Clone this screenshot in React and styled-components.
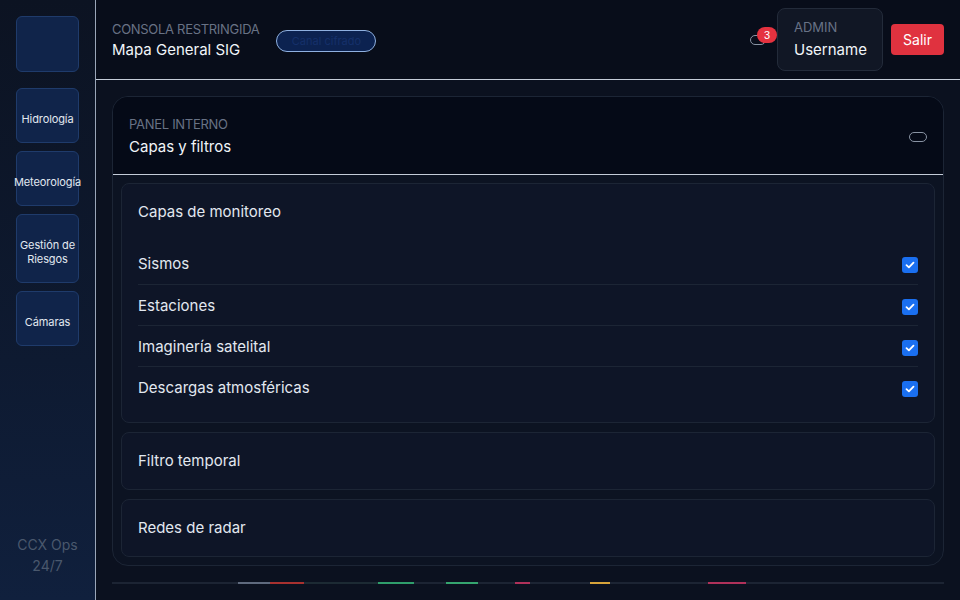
import React from "react";
import styled, { createGlobalStyle } from "styled-components";

const Global = createGlobalStyle`
  * { box-sizing: border-box; }
  html, body { margin: 0; padding: 0; background: #0b111f; }
  body { font-family: Inter, "Noto Sans", sans-serif; color: #e2e8f0; }
`;

const Shell = styled.div`
  display: flex;
  width: 960px;
  height: 600px;
  overflow: hidden;
  background: #0b111f;
`;

const Sidebar = styled.aside`
  width: 96px;
  flex: none;
  display: flex;
  flex-direction: column;
  padding: 16px 16px 24px;
  border-right: 1px solid #9aa6b8;
  background: linear-gradient(180deg, #0c1322 0%, #0e1a31 60%, #10203d 100%);
`;

const NavList = styled.nav`
  display: flex;
  flex-direction: column;
  gap: 8px;
`;

const NavButton = styled.button`
  width: 63px;
  height: ${(p) => (p.$logo ? "56px" : "auto")};
  margin-bottom: ${(p) => (p.$logo ? "8px" : "0")};
  padding: 23px 0 16px;
  display: flex;
  align-items: center;
  justify-content: center;
  text-align: center;
  background: #10244a;
  border: 1px solid #1f3b6b;
  border-radius: 6px;
  color: #e2e8f0;
  font-family: Inter, "Noto Sans", sans-serif;
  font-size: 11px;
  line-height: 14px;
  white-space: pre-line;
  letter-spacing: -0.1px;
`;

const SideFooter = styled.div`
  margin-top: auto;
  text-align: center;
  color: #4a586d;
  font-size: 14px;
  line-height: 21px;
`;

const Main = styled.div`
  flex: 1;
  display: flex;
  flex-direction: column;
  min-width: 0;
`;

const Header = styled.header`
  height: 80px;
  flex: none;
  display: flex;
  align-items: center;
  padding: 0 16px;
  gap: 16px;
  background: #080d1a;
  border-bottom: 1px solid #c4ccd8;
`;

const TitleBlock = styled.div`
  display: flex;
  flex-direction: column;
  gap: 2px;
  padding-top: 1px;
`;

const Eyebrow = styled.div`
  font-size: 13px;
  line-height: 18px;
  color: #687285;
  text-transform: uppercase;
  letter-spacing: -0.3px;
`;

const Title = styled.div`
  font-size: 15px;
  line-height: 20px;
  color: #f1f5f9;
`;

const StatusPill = styled.span`
  width: 100px;
  height: 22px;
  display: inline-flex;
  align-items: center;
  justify-content: center;
  border: 1px solid #8fb0e0;
  border-radius: 11px;
  background: #0c2250;
  color: #15306a;
  font-size: 11px;
  margin-top: 2px;
  margin-left: 1px;
`;

const Actions = styled.div`
  margin-left: auto;
  display: flex;
  align-items: center;
  gap: 8px;
`;

const BellToggle = styled.button`
  position: relative;
  width: 16px;
  height: 10px;
  padding: 0;
  margin-right: 3px;
  border: 1px solid #8993a3;
  border-radius: 5px;
  background: transparent;
`;

const Badge = styled.span`
  position: absolute;
  left: 6px;
  top: -9px;
  min-width: 20px;
  height: 16px;
  border-radius: 8px;
  background: #e5323f;
  color: #fff;
  font-size: 11px;
  line-height: 16px;
  text-align: center;
`;

const UserCard = styled.div`
  width: 106px;
  height: 63px;
  padding: 9px 16px;
  display: flex;
  flex-direction: column;
  gap: 3px;
  background: #111725;
  border: 1px solid #232b3a;
  border-radius: 8px;
`;

const UserRole = styled.div`
  font-size: 13px;
  line-height: 18px;
  color: #687285;
`;

const UserName = styled.div`
  font-size: 15px;
  line-height: 22px;
  color: #f1f5f9;
`;

const LogoutButton = styled.button`
  width: 53px;
  height: 31px;
  border: none;
  border-radius: 4px;
  background: #e0323f;
  color: #fff;
  font-family: Inter, "Noto Sans", sans-serif;
  font-size: 14px;
`;

const Content = styled.main`
  flex: 1;
  padding: 16px 16px 0;
  display: flex;
  flex-direction: column;
  gap: 16px;
`;

const Panel = styled.section`
  border: 1px solid #1c2535;
  border-radius: 16px;
  overflow: hidden;
  background: #0c1322;
`;

const PanelHead = styled.div`
  display: flex;
  align-items: center;
  padding: 18px 16px 16px;
  background: #050a17;
  border-bottom: 1px solid #c4ccd8;
`;

const PanelTitles = styled.div`
  display: flex;
  flex-direction: column;
  gap: 3px;
`;

const PanelTitle = styled.div`
  font-size: 15px;
  line-height: 22px;
  color: #f1f5f9;
`;

const Collapse = styled.button`
  margin-left: auto;
  width: 18px;
  height: 10px;
  padding: 0;
  border: 1px solid #8993a3;
  border-radius: 5px;
  background: transparent;
`;

const PanelBody = styled.div`
  padding: 8px;
  display: flex;
  flex-direction: column;
  gap: 9px;
`;

const Card = styled.div`
  padding: ${(p) => (p.$open ? "17px 16px 15px" : "17px 16px")};
  background: #0e1527;
  border: 1px solid #1c2535;
  border-radius: 8px;
`;

const CardTitle = styled.div`
  font-size: 15px;
  line-height: 22px;
  color: #e2e8f0;
`;

const LayerList = styled.ul`
  list-style: none;
  margin: 20px 0 0;
  padding: 0;
`;

const LayerRow = styled.li`
  height: 41px;
  display: flex;
  align-items: center;
  justify-content: space-between;
  font-size: 15px;
  color: #e2e8f0;
  & + & { border-top: 1px solid #1c2535; }
`;

const Check = styled.span`
  width: 16px;
  height: 16px;
  margin-top: 3px;
  border-radius: 3px;
  background: #1a6ff0;
  display: inline-flex;
  align-items: center;
  justify-content: center;
`;

const Strip = styled.div`
  height: 2px;
  background: linear-gradient(
    90deg,
    #1c2433 0 126px,
    #5f6a7e 126px 158px,
    #a8312f 158px 192px,
    #1c2a33 192px 266px,
    #2f9e6b 266px 302px,
    #1c2433 302px 334px,
    #35a56f 334px 366px,
    #1c2433 366px 403px,
    #b0315a 403px 418px,
    #1c2433 418px 478px,
    #d6a33a 478px 498px,
    #1c2433 498px 596px,
    #b0315a 596px 634px,
    #1c2433 634px 100%
  );
`;

const layers = ["Sismos", "Estaciones", "Imaginería satelital", "Descargas atmosféricas"];
const nav = ["Hidrología", "Meteorología", "Gestión de\nRiesgos", "Cámaras"];

function Tick() {
  return (
    <svg width="10" height="8" viewBox="0 0 10 8" fill="none">
      <path d="M1.5 4.2 L3.9 6.4 L8.5 1.6" stroke="#fff" strokeWidth="1.8" strokeLinecap="round" strokeLinejoin="round" />
    </svg>
  );
}

export default function App() {
  return (
    <>
      <Global />
      <Shell>
        <Sidebar>
          <NavList>
            <NavButton $logo aria-label="Inicio" />
            {nav.map((n) => (
              <NavButton key={n}>{n}</NavButton>
            ))}
          </NavList>
          <SideFooter>
            CCX Ops
            <br />
            24/7
          </SideFooter>
        </Sidebar>
        <Main>
          <Header>
            <TitleBlock>
              <Eyebrow>Consola restringida</Eyebrow>
              <Title>Mapa General SIG</Title>
            </TitleBlock>
            <StatusPill>Canal cifrado</StatusPill>
            <Actions>
              <BellToggle aria-label="Alertas">
                <Badge>3</Badge>
              </BellToggle>
              <UserCard>
                <UserRole>ADMIN</UserRole>
                <UserName>Username</UserName>
              </UserCard>
              <LogoutButton>Salir</LogoutButton>
            </Actions>
          </Header>
          <Content>
            <Panel>
              <PanelHead>
                <PanelTitles>
                  <Eyebrow>Panel interno</Eyebrow>
                  <PanelTitle>Capas y filtros</PanelTitle>
                </PanelTitles>
                <Collapse aria-label="Contraer" />
              </PanelHead>
              <PanelBody>
                <Card $open>
                  <CardTitle>Capas de monitoreo</CardTitle>
                  <LayerList>
                    {layers.map((l) => (
                      <LayerRow key={l}>
                        {l}
                        <Check>
                          <Tick />
                        </Check>
                      </LayerRow>
                    ))}
                  </LayerList>
                </Card>
                <Card>
                  <CardTitle>Filtro temporal</CardTitle>
                </Card>
                <Card>
                  <CardTitle>Redes de radar</CardTitle>
                </Card>
              </PanelBody>
            </Panel>
            <Strip />
          </Content>
        </Main>
      </Shell>
    </>
  );
}
